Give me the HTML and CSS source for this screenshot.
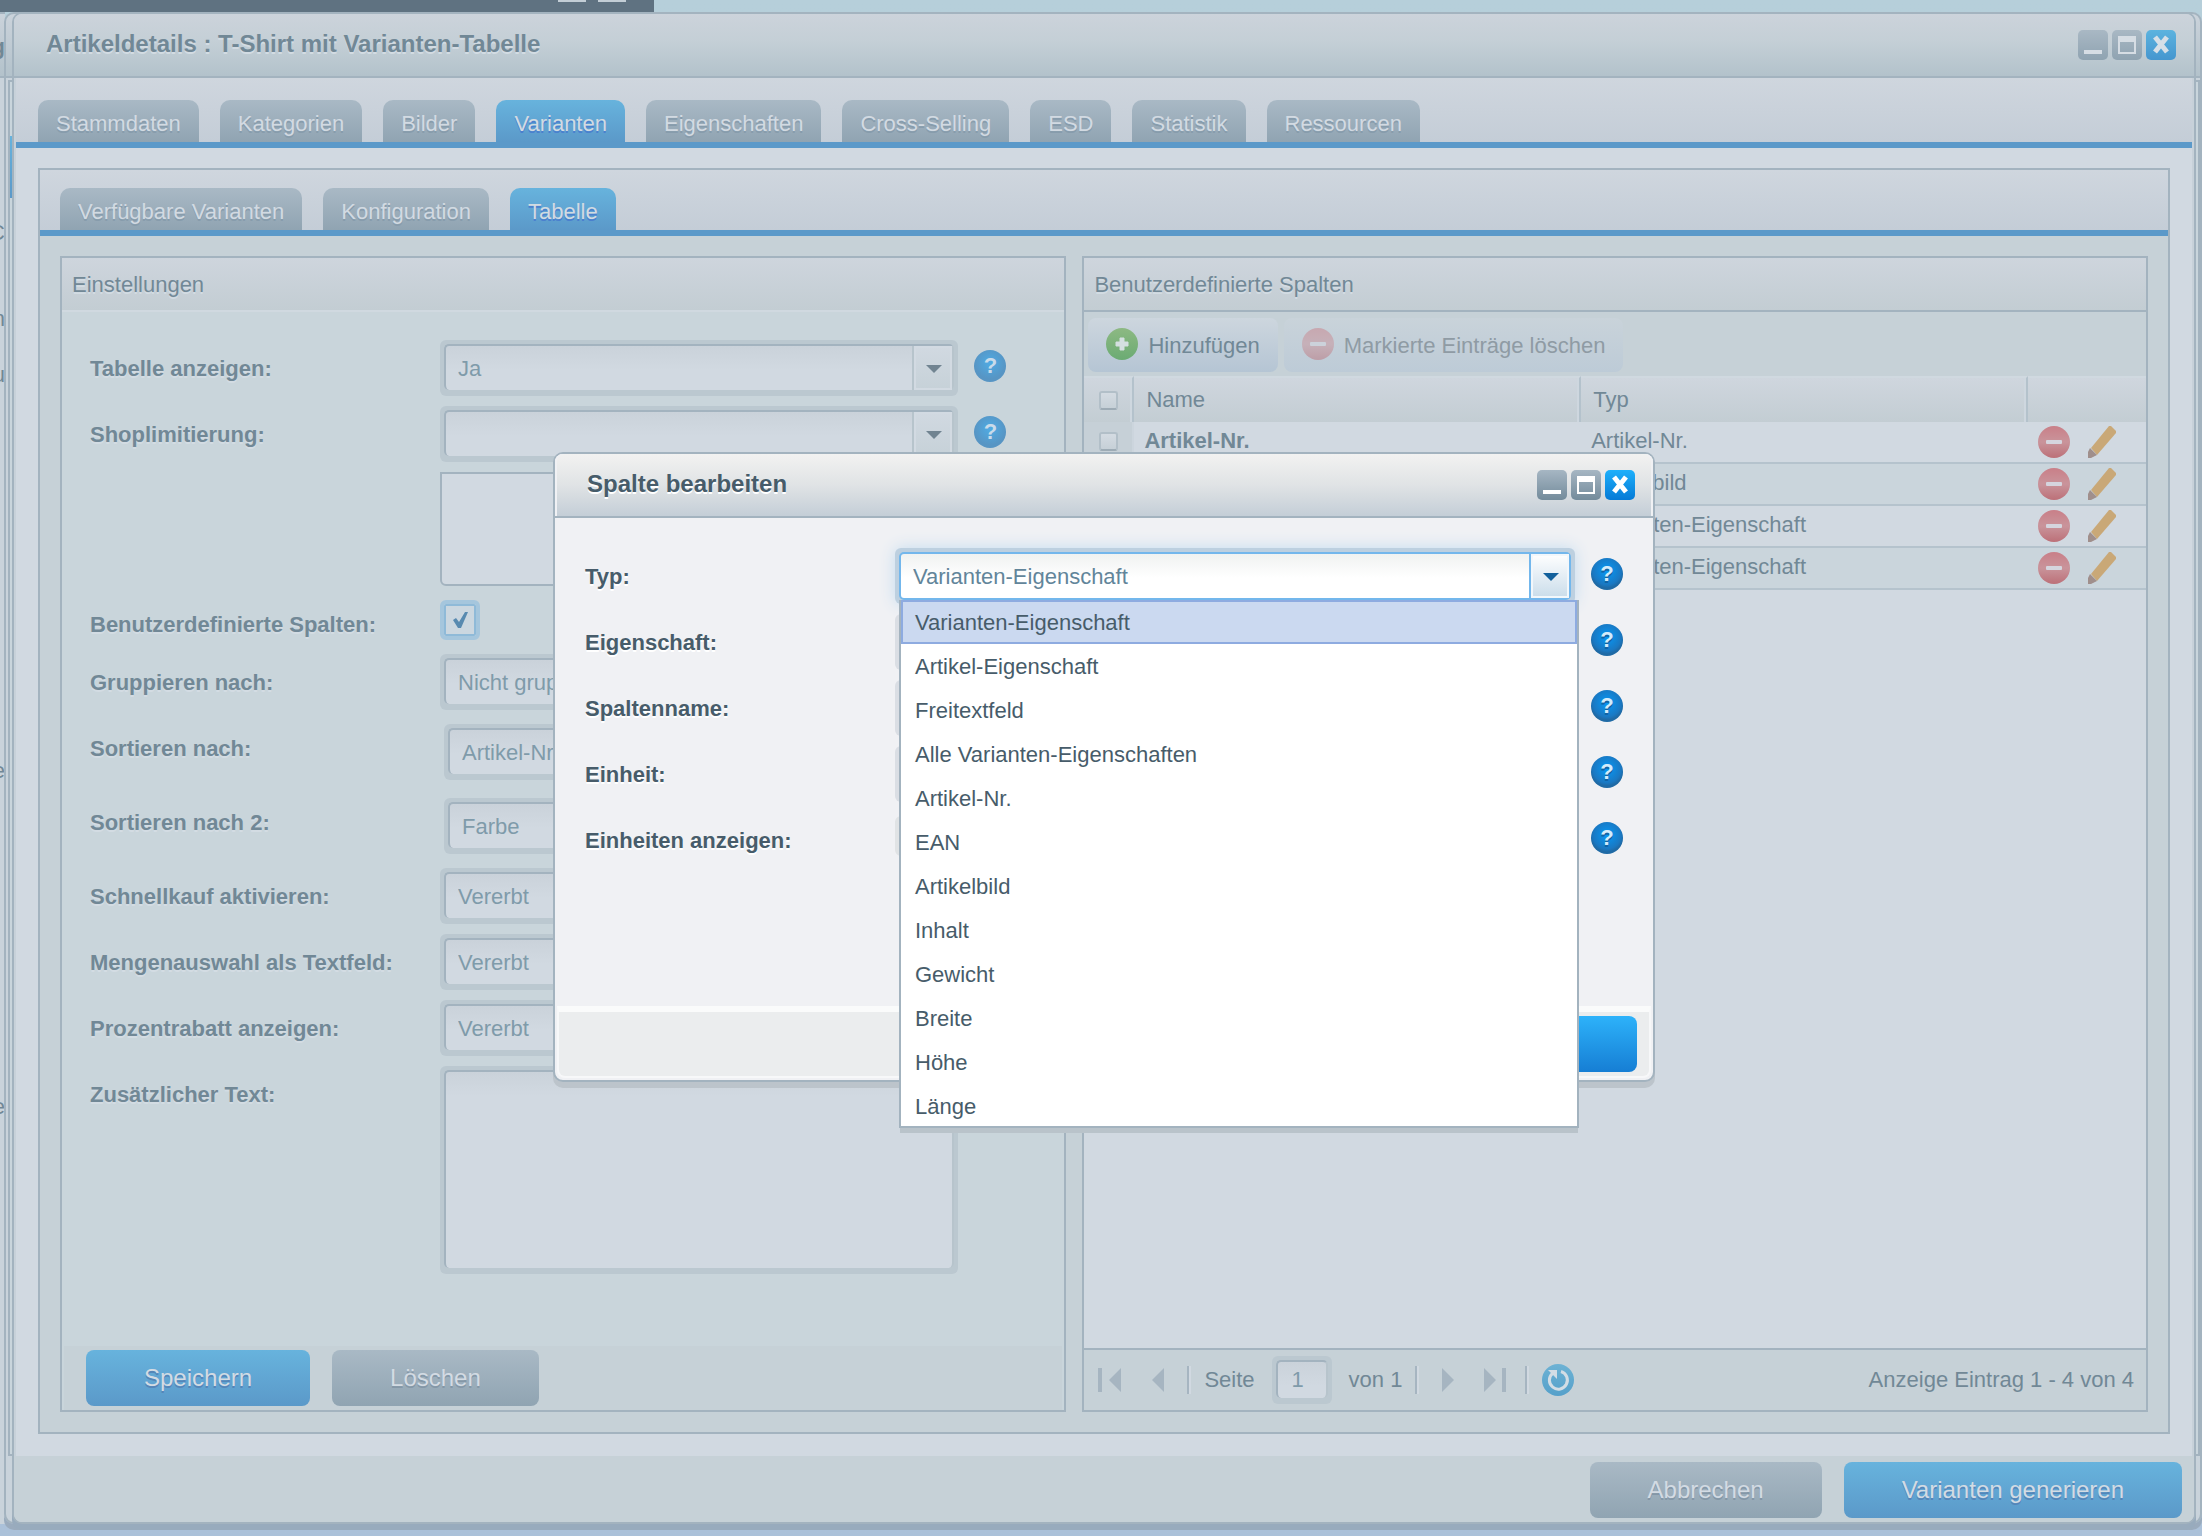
FILE: index.html
```html
<!DOCTYPE html>
<html lang="de">
<head>
<meta charset="utf-8">
<title>Artikeldetails : T-Shirt mit Varianten-Tabelle</title>
<link rel="stylesheet" href="styles.css">
</head>
<body>
<svg class="defs" aria-hidden="true">
  <defs>
    <linearGradient id="red" x1="0" y1="0" x2="0" y2="1"><stop offset="0" stop-color="#c97f88"/><stop offset=".5" stop-color="#c9949b"/><stop offset="1" stop-color="#bc7078"/></linearGradient>
    <linearGradient id="green" x1="0" y1="0" x2="0" y2="1"><stop offset="0" stop-color="#8db983"/><stop offset="1" stop-color="#6bab73"/></linearGradient>
    <linearGradient id="aqua" x1="0" y1="0" x2="0" y2="1"><stop offset="0" stop-color="#6db2d4"/><stop offset="1" stop-color="#55a0ca"/></linearGradient>
    <symbol id="minus" viewBox="0 0 32 32"><circle cx="16" cy="16" r="16" fill="url(#red)"/><rect x="8" y="14" width="16" height="4" rx="1" fill="#d5d5de"/></symbol>
    <symbol id="plus" viewBox="0 0 32 32"><circle cx="16" cy="16" r="16" fill="url(#green)"/><path d="M14 10h4v4h4v4h-4v4h-4v-4h-4v-4h4z" fill="#d4dfe0" stroke="#d4dfe0"/></symbol>
    <symbol id="pencil" viewBox="0 0 32 32"><path d="M23 0h2l5 5v2L11 29l-6-7z" fill="#c9a877"/><path d="M4 22l7 7-6 3H2v-6z" fill="#a08f8c"/></symbol>
    <symbol id="first" viewBox="0 0 32 32"><path d="M4 4h4v24H4zM27 4v24L15 16z" fill="#a6b5c1"/></symbol>
    <symbol id="prev" viewBox="0 0 32 32"><path d="M22 4v24L10 16z" fill="#a6b5c1"/></symbol>
    <symbol id="next" viewBox="0 0 32 32"><path d="M10 4v24l12-12z" fill="#a6b5c1"/></symbol>
    <symbol id="last" viewBox="0 0 32 32"><path d="M4 4v24l12-12zM22 4h4v24h-4z" fill="#a6b5c1"/></symbol>
    <symbol id="reload" viewBox="0 0 32 32"><circle cx="16" cy="16" r="16" fill="url(#aqua)"/><path d="M19 7.500a9 9 0 1 1-8.500 1.800" fill="none" stroke="#d3dde5" stroke-width="3"/><path d="M6 6h9v9l-3.500-3.500z" fill="#d3dde5"/></symbol>
  </defs>
</svg>

<div class="dock" aria-hidden="true"><i></i><i></i></div>
<div class="behind" aria-hidden="true"><b>g</b><span>C</span><span>n</span><span>u</span><span>e</span><span>e</span></div>
<div class="stacked" aria-hidden="true"><div class="stacked-body"><i></i></div></div>

<main class="window">
  <header class="titlebar">
    <h1>Artikeldetails : T-Shirt mit Varianten-Tabelle</h1>
    <div class="tools">
      <button class="tool min" aria-label="Minimieren"></button>
      <button class="tool max" aria-label="Maximieren"></button>
      <button class="tool close" aria-label="Schließen"><svg viewBox="0 0 30 30"><path d="M9 7l12 15M21 7L9 22"/></svg></button>
    </div>
  </header>

  <nav class="tabs">
    <button>Stammdaten</button><button>Kategorien</button><button>Bilder</button><button class="active">Varianten</button><button>Eigenschaften</button><button>Cross-Selling</button><button>ESD</button><button>Statistik</button><button>Ressourcen</button>
  </nav>

  <div class="content">
    <div class="inner">
      <nav class="tabs sub">
        <button>Verfügbare Varianten</button><button>Konfiguration</button><button class="active">Tabelle</button>
      </nav>
      <div class="panels">
        <section class="panel settings">
          <h2>Einstellungen</h2>
          <form class="form">
            <label for="show">Tabelle anzeigen:</label>
            <div class="field combo"><select id="show"><option>Ja</option></select></div>
            <button type="button" class="help" aria-label="Hilfe">?</button>

            <label for="shop">Shoplimitierung:</label>
            <div class="field combo"><select id="shop"><option></option></select></div>
            <button type="button" class="help" aria-label="Hilfe">?</button>

            <div class="listbox"></div>

            <label for="custom" class="low">Benutzerdefinierte Spalten:</label>
            <div class="tick"><input type="checkbox" id="custom" checked></div>

            <label for="group">Gruppieren nach:</label>
            <div class="field combo"><select id="group"><option>Nicht gruppieren</option></select></div>

            <label for="sort1">Sortieren nach:</label>
            <div class="nested"><div class="field combo"><select id="sort1"><option>Artikel-Nr.</option></select></div></div>

            <label for="sort2">Sortieren nach 2:</label>
            <div class="nested"><div class="field combo"><select id="sort2"><option>Farbe</option></select></div></div>

            <label for="quick">Schnellkauf aktivieren:</label>
            <div class="field combo"><select id="quick"><option>Vererbt</option></select></div>

            <label for="amount">Mengenauswahl als Textfeld:</label>
            <div class="field combo"><select id="amount"><option>Vererbt</option></select></div>

            <label for="percent">Prozentrabatt anzeigen:</label>
            <div class="field combo"><select id="percent"><option>Vererbt</option></select></div>

            <label for="extra">Zusätzlicher Text:</label>
            <div class="field area"><textarea id="extra"></textarea></div>
          </form>
          <footer class="actions">
            <button class="btn primary">Speichern</button><button class="btn">Löschen</button>
          </footer>
        </section>

        <section class="panel columns">
          <h2>Benutzerdefinierte Spalten</h2>
          <div class="toolbar">
            <button><svg class="ico"><use href="#plus"/></svg>Hinzufügen</button>
            <button class="off"><svg class="ico"><use href="#minus"/></svg>Markierte Einträge löschen</button>
          </div>
          <div class="grid">
            <table>
              <colgroup><col class="c-check"><col><col><col class="c-act"></colgroup>
              <thead><tr><th><input type="checkbox" aria-label="Alle auswählen"></th><th>Name</th><th>Typ</th><th></th></tr></thead>
              <tbody>
                <tr><td><input type="checkbox" aria-label="Auswählen"></td><td class="name">Artikel-Nr.</td><td>Artikel-Nr.</td><td><div class="rowact"><button aria-label="Löschen"><svg class="ico"><use href="#minus"/></svg></button><button aria-label="Bearbeiten"><svg class="ico"><use href="#pencil"/></svg></button></div></td></tr>
                <tr><td><input type="checkbox" aria-label="Auswählen"></td><td class="name">Bild</td><td>Artikelbild</td><td><div class="rowact"><button aria-label="Löschen"><svg class="ico"><use href="#minus"/></svg></button><button aria-label="Bearbeiten"><svg class="ico"><use href="#pencil"/></svg></button></div></td></tr>
                <tr><td><input type="checkbox" aria-label="Auswählen"></td><td class="name">Farbe</td><td>Varianten-Eigenschaft</td><td><div class="rowact"><button aria-label="Löschen"><svg class="ico"><use href="#minus"/></svg></button><button aria-label="Bearbeiten"><svg class="ico"><use href="#pencil"/></svg></button></div></td></tr>
                <tr><td><input type="checkbox" aria-label="Auswählen"></td><td class="name">Größe</td><td>Varianten-Eigenschaft</td><td><div class="rowact"><button aria-label="Löschen"><svg class="ico"><use href="#minus"/></svg></button><button aria-label="Bearbeiten"><svg class="ico"><use href="#pencil"/></svg></button></div></td></tr>
              </tbody>
            </table>
          </div>
          <footer class="pager">
            <button aria-label="Erste Seite"><svg class="ico"><use href="#first"/></svg></button>
            <button aria-label="Vorherige Seite"><svg class="ico"><use href="#prev"/></svg></button>
            <i class="sep"></i>
            <label for="page">Seite</label>
            <div class="field page"><input id="page" value="1"></div>
            <span>von 1</span>
            <i class="sep"></i>
            <button aria-label="Nächste Seite"><svg class="ico"><use href="#next"/></svg></button>
            <button aria-label="Letzte Seite"><svg class="ico"><use href="#last"/></svg></button>
            <i class="sep"></i>
            <button aria-label="Aktualisieren"><svg class="ico"><use href="#reload"/></svg></button>
            <span class="info">Anzeige Eintrag 1 - 4 von 4</span>
          </footer>
        </section>
      </div>
    </div>
  </div>

  <footer class="bottom">
    <button class="btn">Abbrechen</button><button class="btn primary">Varianten generieren</button>
  </footer>
</main>

<div class="overlay">
  <section class="modal" role="dialog" aria-labelledby="modal-title">
    <header class="titlebar">
      <h1 id="modal-title">Spalte bearbeiten</h1>
      <div class="tools">
        <button class="tool min" aria-label="Minimieren"></button>
        <button class="tool max" aria-label="Maximieren"></button>
        <button class="tool close" aria-label="Schließen"><svg viewBox="0 0 30 30"><path d="M9 7l12 15M21 7L9 22"/></svg></button>
      </div>
    </header>
    <form class="form">
      <label for="type">Typ:</label>
      <div class="field combo open">
        <input id="type" role="combobox" aria-expanded="true" aria-controls="types" value="Varianten-Eigenschaft">
        <ul class="dropdown" id="types" role="listbox">
          <li role="option" aria-selected="true">Varianten-Eigenschaft</li>
          <li role="option">Artikel-Eigenschaft</li>
          <li role="option">Freitextfeld</li>
          <li role="option">Alle Varianten-Eigenschaften</li>
          <li role="option">Artikel-Nr.</li>
          <li role="option">EAN</li>
          <li role="option">Artikelbild</li>
          <li role="option">Inhalt</li>
          <li role="option">Gewicht</li>
          <li role="option">Breite</li>
          <li role="option">Höhe</li>
          <li role="option">Länge</li>
        </ul>
      </div>
      <button type="button" class="help" aria-label="Hilfe">?</button>

      <label for="prop">Eigenschaft:</label>
      <div class="field"><input id="prop"></div>
      <button type="button" class="help" aria-label="Hilfe">?</button>

      <label for="colname">Spaltenname:</label>
      <div class="field"><input id="colname"></div>
      <button type="button" class="help" aria-label="Hilfe">?</button>

      <label for="unit">Einheit:</label>
      <div class="field"><input id="unit"></div>
      <button type="button" class="help" aria-label="Hilfe">?</button>

      <label for="showunit">Einheiten anzeigen:</label>
      <div class="tick"><input type="checkbox" id="showunit"></div>
      <button type="button" class="help" aria-label="Hilfe">?</button>
    </form>
    <footer class="modal-actions"><button class="btn primary">Speichern</button></footer>
  </section>
</div>
</body>
</html>
```

FILE: styles.css
```css
*, *::before, *::after { box-sizing: border-box; }

:root {
  --line: #a3b3bf;
  --text: #718896;
  --shade: #c6d1d7;
  --paper: #d1d9e1;
  --ring: #bbc8d0;
  --shadow: #d3dce3;
  --blue: #5b99c9;
}

body {
  margin: 0;
  min-height: 100vh;
  display: flex;
  position: relative;
  overflow: hidden;
  background: linear-gradient(#b6cfda, #abc1d9);
  color: var(--text);
  font: 22px/26px "Liberation Sans", Arial, sans-serif;
}

button, input, select, textarea {
  font: inherit;
  color: inherit;
  margin: 0;
  padding: 0;
  border: 0;
  background: none;
  outline: 0;
  appearance: none;
}

.defs { position: absolute; width: 0; height: 0; }
.ico { display: block; width: 32px; height: 32px; flex: none; }

/* desktop behind the windows */
.dock {
  position: absolute;
  top: 0;
  left: 0;
  width: 654px;
  height: 12px;
  padding-right: 28px;
  display: flex;
  justify-content: flex-end;
  gap: 12px;
  background: #5f7281;
}
.dock i { width: 28px; height: 2px; background: #c3ced6; }

.behind {
  position: absolute;
  top: 12px;
  bottom: 12px;
  left: 0;
  width: 5px;
  overflow: hidden;
  display: flex;
  flex-direction: column;
  align-items: flex-end;
  padding-top: 20px;
  border-top: 2px solid var(--line);
  background: linear-gradient(#cbd3db, #b3c2cb 62px, var(--line) 62px, var(--line) 64px, #c9d3db 64px);
}
.behind span:nth-child(2) { margin-top: 160px; }
.behind span:nth-child(3) { margin-top: 60px; }
.behind span:nth-child(4) { margin-top: 30px; }
.behind span:nth-child(5) { margin-top: 370px; }
.behind span:nth-child(6) { margin-top: 310px; }

.stacked {
  position: absolute;
  inset: 12px 0 12px 4px;
  border: 2px solid var(--line);
  border-radius: 10px;
  background: linear-gradient(#cbd3db, #b3c2cb 62px, var(--line) 62px, var(--line) 64px, #c9d3db 64px);
  padding: 66px 0 66px 2px;
  box-shadow: 0 6px 0 #9aabbd;
}
.stacked-body {
  height: 100%;
  border: 2px solid var(--line);
  padding-top: 54px;
  background: #c9d5dc;
}
.stacked-body i { display: block; width: 10px; height: 62px; background: linear-gradient(#67b3dd, var(--blue)); }

/* windows */
.window {
  position: relative;
  flex: 1;
  min-width: 0;
  margin: 12px 6px 12px 12px;
  display: flex;
  flex-direction: column;
  border: 2px solid var(--line);
  border-radius: 10px;
  background: var(--paper);
  box-shadow: inset 0 0 0 2px #c7d1d9, 0 6px 0 #98abbd;
}

.titlebar {
  height: 64px;
  display: flex;
  justify-content: space-between;
  padding: 0 18px 0 32px;
  border-bottom: 2px solid var(--line);
  border-radius: 8px 8px 0 0;
  background: linear-gradient(#ccd3db, #c4cfd6 45%, #b3c2cb);
}
h1 {
  margin: 0;
  font-size: 24px;
  line-height: 60px;
  text-shadow: 0 2px 0 var(--shadow);
}
.tools { display: flex; gap: 4px; padding-top: 16px; }
.tool {
  width: 30px;
  height: 30px;
  border-radius: 5px;
  background: linear-gradient(#a9b8c4, #8fa3b1);
  display: flex;
  justify-content: center;
  align-items: center;
}
.tool.min::after { content: ""; width: 18px; height: 4px; margin-top: 14px; background: #d6dde4; }
.tool.max::after { content: ""; width: 18px; height: 18px; border: 2px solid #d6dde4; border-top-width: 6px; }
.tool.close { background: linear-gradient(#5cb3df, #4596cf); }
.tool svg { width: 30px; height: 30px; fill: none; stroke: #d6dfe7; stroke-width: 5; }

/* tabs */
.tabs {
  display: flex;
  gap: 21px;
  margin: 0 2px;
  padding: 22px 22px 0;
  border-bottom: 6px solid var(--blue);
  background: linear-gradient(#cfd6de, #c4cdd7);
}
.tabs.sub { margin: 0; padding: 18px 20px 0; }
.tabs button {
  height: 42px;
  padding: 2px 18px 0;
  border-radius: 10px 10px 0 0;
  line-height: 44px;
  white-space: nowrap;
  color: #d2dae2;
  background: linear-gradient(#a9b9c5, #90a4b2);
  text-shadow: 0 2px 0 #879cac;
}
.tabs .active { background: linear-gradient(#67b3dd, var(--blue)); text-shadow: 0 2px 0 #4a80ce; }

.content { flex: 1; display: flex; padding: 20px 24px 22px; }
.inner {
  flex: 1;
  min-width: 0;
  display: flex;
  flex-direction: column;
  border: 2px solid var(--line);
  background: var(--shade);
}
.panels {
  flex: 1;
  display: grid;
  grid-template-columns: minmax(0, 17fr) minmax(0, 18fr);
  gap: 16px;
  padding: 20px;
}
.panel { display: flex; flex-direction: column; border: 2px solid var(--line); }
.panel h2 {
  margin: 0;
  height: 54px;
  padding: 0 10px;
  font-size: 22px;
  font-weight: 400;
  line-height: 54px;
  border-bottom: 2px solid var(--line);
  background: linear-gradient(#ced5dd, #c3cdd3);
  text-shadow: 0 2px 0 var(--shadow);
}
.settings { background: #c9d5db; }
.settings h2 { border-color: #d0d9e0; }

/* forms */
.form {
  flex: 1;
  display: grid;
  grid-template-columns: 334px minmax(0, 1fr) 32px;
  align-content: start;
  gap: 10px 16px;
  padding: 28px 58px 0 28px;
}
.form label {
  grid-column: 1;
  font-weight: 700;
  line-height: 58px;
  height: 56px;
  white-space: nowrap;
  text-shadow: 0 2px 0 var(--shadow);
}
.form .low { height: 48px; }

.field {
  position: relative;
  height: 56px;
  padding: 4px 4px 6px;
  border-radius: 6px;
  background: var(--ring);
}
.field input, .field select, .field textarea {
  display: block;
  width: 100%;
  height: 100%;
  padding: 2px 12px 0;
  border: 2px solid var(--line);
  border-right-color: #b7c4cc;
  border-bottom: 0;
  border-radius: 5px;
  background: linear-gradient(#cad2da, var(--paper) 24px);
  color: #7f9baa;
}
.field textarea { resize: none; }
.field.area { height: 208px; }
.combo::before {
  content: "";
  position: absolute;
  top: 6px;
  right: 6px;
  bottom: 6px;
  width: 40px;
  border-left: 2px solid #b7c4cc;
  background: linear-gradient(#d1d9e1, #c6d1d8);
  box-shadow: inset 0 0 0 2px #d2dae2;
}
.combo::after {
  content: "";
  position: absolute;
  top: 25px;
  right: 16px;
  border: 8px solid transparent;
  border-top-color: #718491;
  border-bottom-width: 0;
}
.nested { padding: 4px 0 4px 4px; height: 64px; }
.listbox {
  grid-column: 2;
  height: 114px;
  border: 2px solid var(--line);
  border-radius: 0 0 6px 6px;
  background: var(--paper);
}
.tick { display: flex; align-items: flex-start; padding-top: 4px; }
.tick input {
  width: 40px;
  height: 40px;
  border: 4px solid #a5c6dd;
  border-radius: 6px;
  background: #cbd7e0;
  box-shadow: inset 0 0 0 2px #8fbad8;
}
.tick input:checked {
  background: #cbd7e0 url("data:image/svg+xml,%3Csvg xmlns='http://www.w3.org/2000/svg' viewBox='0 0 32 32'%3E%3Cpath d='M9 16l3-2 3 4 6-10h3l-7 16h-3z' fill='%23588ab0'/%3E%3C/svg%3E") center / 32px 32px;
}
.help {
  grid-column: 3;
  width: 32px;
  height: 32px;
  margin-top: 10px;
  border-radius: 50%;
  font-size: 22px;
  font-weight: 700;
  line-height: 32px;
  text-align: center;
  color: #c9dbea;
  background: radial-gradient(circle at 50% 40%, #4fabe4, #5795c4 16px);
}

.btn {
  height: 56px;
  padding: 0 58px;
  border-radius: 8px;
  font-size: 24px;
  line-height: 54px;
  white-space: nowrap;
  color: #d3dbe3;
  background: linear-gradient(#a9b9c5, #90a4b2);
  text-shadow: 0 2px 0 #8497a7;
}
.btn.primary { background: linear-gradient(#67b3dd, var(--blue)); text-shadow: 0 2px 0 #5585b8; }
.actions { display: flex; gap: 22px; margin: 0 2px; padding: 4px 22px; background: var(--shade); }

/* columns grid */
.toolbar { display: flex; gap: 6px; height: 64px; padding: 6px 4px 4px; background: var(--shade); }
.toolbar button {
  display: flex;
  align-items: center;
  gap: 10px;
  padding: 2px 18px 0;
  border-radius: 8px;
  white-space: nowrap;
  line-height: 56px;
  background: linear-gradient(#cdd6de, #b5c5d4);
}
.toolbar .ico { margin-bottom: 4px; }
.toolbar .off { color: #8f9ba4; background: linear-gradient(#c9d3da, #bdcbd7); }
.off .ico { opacity: .5; }
.grid { flex: 1; background: var(--paper); }
table { width: 100%; table-layout: fixed; border-collapse: separate; border-spacing: 0; }
.c-check { width: 50px; }
.c-act { width: 118px; }
th {
  height: 46px;
  padding: 0 10px 0 12px;
  font-weight: 400;
  text-align: left;
  border-top: 2px solid #d0d9e0;
  border-right: 2px solid #b4c2cc;
  box-shadow: inset -2px 0 0 #ced7df;
  background: linear-gradient(#cfd6de, #c3cdd3);
}
th:last-child { border-right: 0; box-shadow: none; }
td {
  height: 42px;
  padding: 0 10px;
  line-height: 37px;
  vertical-align: top;
  border-bottom: 2px solid #b5c3cd;
}
tr:nth-child(even) td { background: #cad5dc; }
.name { font-weight: 700; }
tbody td:first-child { background: #c6d0d7; border-right: 2px solid #ccd5dd; }
th:first-child, td:first-child { padding: 0 0 0 15px; }
table input {
  display: block;
  width: 19px;
  height: 19px;
  border: 2px solid #b2bfc8;
  border-bottom-color: #9dabb5;
  border-radius: 3px;
  background: linear-gradient(#d4dbe2, #c6d0d7);
}
td input { margin-top: 10px; }
.rowact { display: flex; gap: 16px; padding-top: 4px; }

.pager {
  display: flex;
  align-items: center;
  gap: 16px;
  height: 62px;
  padding: 0 12px 0 10px;
  white-space: nowrap;
  border-top: 2px solid var(--line);
  background: var(--shade);
}
.sep { width: 4px; height: 28px; margin: 0 -3px; border-left: 2px solid #a6b5c1; border-right: 2px solid var(--paper); }
.page { width: 60px; height: 48px; margin: 0 1px; }
.page input { padding: 0 14px; }
.info { margin-left: auto; }

.bottom {
  display: flex;
  justify-content: flex-end;
  gap: 22px;
  padding: 6px 12px 4px;
  border-radius: 0 0 8px 8px;
  background: var(--shade);
}

/* modal */
.overlay {
  position: absolute;
  inset: 0;
  display: flex;
  justify-content: center;
  align-items: center;
  padding-left: 6px;
  padding-bottom: 2px;
}
.modal {
  --text: #475c6a;
  --shadow: #fff;
  --ring: #dadee4;
  width: calc(50% + 4px);
  min-width: 1000px;
  border: 2px solid var(--line);
  border-radius: 10px;
  background: #f0f1f4;
  color: var(--text);
  box-shadow: 0 6px 0 #bcc4cb;
}
.modal .titlebar {
  background: linear-gradient(#f2f2f1, #e0e3e5 50%, #c4ced7);
  box-shadow: inset 2px 0 0 #f0f1f4, inset -2px 0 0 #f0f1f4;
}
.modal .tool { background: linear-gradient(#a6b6c3, #738b9b); }
.modal .close { background: linear-gradient(#1eb0fb, #057ad6); }
.modal .tool::after { border-color: #fff; }
.modal .min::after { background: #fff; }
.modal .tool svg { stroke: #fff; }
.modal .form { grid-template-columns: 294px minmax(0, 1fr) 32px; padding: 30px 30px 138px; }
.modal .help { color: #d4ecfb; background: radial-gradient(circle at 50% 40%, #0698f5, #1a78c2 14px, #1f6aa5 17px); text-shadow: 0 2px 0 #1263a3; }
.modal .field input { background: linear-gradient(#f0f2f1, #fff 24px); color: #62859a; }
.modal .tick input { border-color: #e0e3e5; background: #fff; box-shadow: none; }
.modal .open { box-shadow: 0 0 16px #c3dcf0; background: #bdd0e0; }
.modal .open input { border: 2px solid #73b7ec; height: 48px; }
.open::before { border-left-color: #73b7ec; background: linear-gradient(#fff, #c9dcea); box-shadow: inset 0 0 0 2px #f2f7fb; }
.open::after { border-top-color: #12609c; }
.dropdown {
  position: absolute;
  z-index: 1;
  top: 52px;
  left: 4px;
  right: -4px;
  margin: 0;
  padding: 0;
  list-style: none;
  border: 2px solid var(--line);
  border-top: 0;
  background: #fff;
  box-shadow: 0 6px 0 -1px #b9c3ca;
}
.dropdown li { height: 44px; padding: 0 14px; line-height: 45px; }
.dropdown li:last-child { height: 42px; }
.dropdown li[aria-selected] { padding: 0 12px; border: 2px solid #8eabe0; line-height: 41px; background: #cbd9f0; }
.modal-actions {
  display: flex;
  justify-content: flex-end;
  margin: 0 2px 2px;
  padding: 4px 12px;
  border: 2px solid #f7f8f9;
  border-top: 6px solid #fafbfb;
  border-radius: 0 0 8px 8px;
  background: #ebedee;
}
.modal .btn.primary { color: #fff; background: linear-gradient(#2db2fa, #167ed4); text-shadow: none; }
```
